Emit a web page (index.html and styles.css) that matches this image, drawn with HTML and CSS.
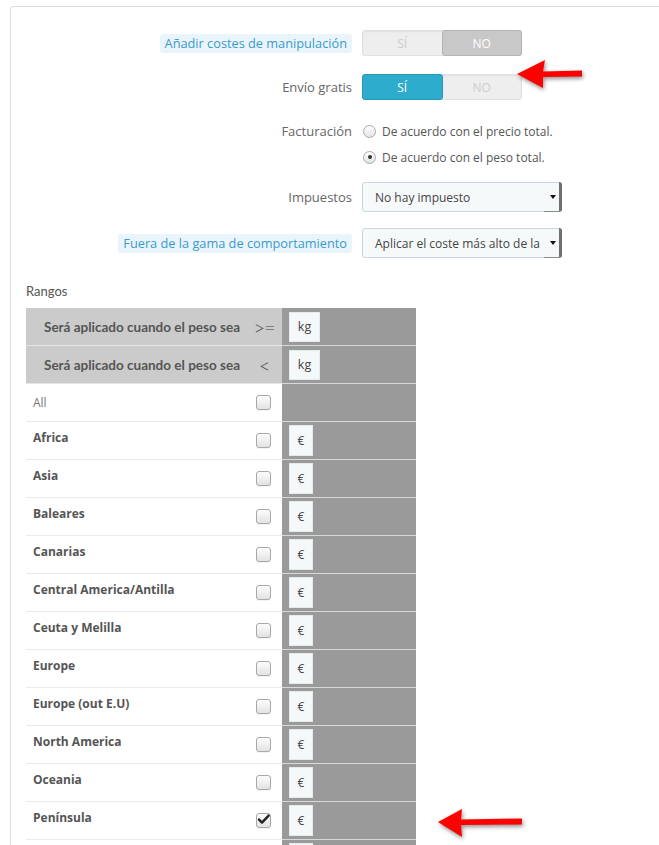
FILE: index.html
```html
<!DOCTYPE html>
<html lang="es">
<head>
<meta charset="utf-8">
<title>Transportista</title>
<link rel="stylesheet" href="styles.css">
</head>
<body>
<div class="page">
  <div class="panel">
    <div class="form-row mb18">
      <div class="label"><span class="hint">Añadir costes de manipulación</span></div>
      <div class="switch"><span class="opt">Sí</span><span class="opt active-grey">NO</span></div>
    </div>
    <div class="form-row mb18">
      <div class="label">Envío gratis</div>
      <div class="switch"><span class="opt active-blue">Sí</span><span class="opt">NO</span></div>
    </div>
    <div class="form-row mb12 top">
      <div class="label lh26">Facturación</div>
      <div class="radios">
        <div class="radio-line"><span class="radio"></span><span>De acuerdo con el precio total.</span></div>
        <div class="radio-line"><span class="radio checked"></span><span>De acuerdo con el peso total.</span></div>
      </div>
    </div>
    <div class="form-row mb16">
      <div class="label">Impuestos</div>
      <div class="select"><span class="select-text">No hay impuesto</span><span class="caret"></span></div>
    </div>
    <div class="form-row mb25">
      <div class="label"><span class="hint">Fuera de la gama de comportamiento</span></div>
      <div class="select"><span class="select-text">Aplicar el coste más alto de la</span><span class="caret"></span></div>
    </div>

    <div class="section-title">Rangos</div>
    <table class="ranges">
      <colgroup><col class="c-left"><col class="c-right"></colgroup>
      <tr class="head">
        <td class="hl"><div class="hcell"><span>Será aplicado cuando el peso sea</span><span class="op">&gt;=</span></div></td>
        <td class="val"><span class="unit kg">kg</span></td>
      </tr>
      <tr class="head">
        <td class="hl"><div class="hcell"><span>Será aplicado cuando el peso sea</span><span class="op">&lt;</span></div></td>
        <td class="val"><span class="unit kg">kg</span></td>
      </tr>
      <tr>
        <td class="zone"><div class="zcell"><span class="all">All</span><span class="cb"></span></div></td>
        <td class="val"></td>
      </tr>
      <tr><td class="zone"><div class="zcell"><span class="zname">Africa</span><span class="cb"></span></div></td><td class="val"><span class="unit">€</span></td></tr>
      <tr><td class="zone"><div class="zcell"><span class="zname">Asia</span><span class="cb"></span></div></td><td class="val"><span class="unit">€</span></td></tr>
      <tr><td class="zone"><div class="zcell"><span class="zname">Baleares</span><span class="cb"></span></div></td><td class="val"><span class="unit">€</span></td></tr>
      <tr><td class="zone"><div class="zcell"><span class="zname">Canarias</span><span class="cb"></span></div></td><td class="val"><span class="unit">€</span></td></tr>
      <tr><td class="zone"><div class="zcell"><span class="zname">Central America/Antilla</span><span class="cb"></span></div></td><td class="val"><span class="unit">€</span></td></tr>
      <tr><td class="zone"><div class="zcell"><span class="zname">Ceuta y Melilla</span><span class="cb"></span></div></td><td class="val"><span class="unit">€</span></td></tr>
      <tr><td class="zone"><div class="zcell"><span class="zname">Europe</span><span class="cb"></span></div></td><td class="val"><span class="unit">€</span></td></tr>
      <tr><td class="zone"><div class="zcell"><span class="zname">Europe (out E.U)</span><span class="cb"></span></div></td><td class="val"><span class="unit">€</span></td></tr>
      <tr><td class="zone"><div class="zcell"><span class="zname">North America</span><span class="cb"></span></div></td><td class="val"><span class="unit">€</span></td></tr>
      <tr><td class="zone"><div class="zcell"><span class="zname">Oceania</span><span class="cb"></span></div></td><td class="val"><span class="unit">€</span></td></tr>
      <tr><td class="zone"><div class="zcell"><span class="zname">Península</span><span class="cb checked"><svg viewBox="0 0 15 15" width="15" height="15"><path d="M3 7.6 L6 10.6 L12.6 3.6" fill="none" stroke="#222" stroke-width="2.4" stroke-linecap="round" stroke-linejoin="round"/></svg></span></div></td><td class="val"><span class="unit">€</span></td></tr>
      <tr><td class="zone"><div class="zcell"><span class="cb"></span></div></td><td class="val"><span class="unit"></span></td></tr>
    </table>
  </div>

  <svg class="arrow arrow-top" width="80" height="44" viewBox="0 0 80 44">
    <polygon points="7,22 35,8 33,19.5 72,18.5 72,24.5 33,25 33,36" fill="#ff0000"/>
  </svg>
  <svg class="arrow arrow-bottom" width="100" height="44" viewBox="0 0 100 44">
    <polygon points="8,22 32,9 31,19.5 92,18.5 92,24.5 31,25 32,37" fill="#ff0000"/>
  </svg>
</div>
</body>
</html>
```
FILE: styles.css
```css
html, body {
  margin: 0;
  padding: 0;
  background: #fff;
}
body {
  font-family: "Open Sans", "DejaVu Sans", sans-serif;
  font-size: 13px;
  color: #555;
}
.page {
  position: relative;
  height: 845px;
  overflow: hidden;
}
.panel {
  margin: 6px 0 0 10px;
  border-top: 1px solid #ddd;
  border-left: 1px solid #ddd;
  border-top-left-radius: 4px;
  padding-top: 23px;
}
.form-row {
  display: grid;
  grid-template-columns: 341px auto;
  column-gap: 10px;
  justify-content: start;
  align-items: center;
}
.form-row.top { align-items: start; }
.mb18 { margin-bottom: 18px; }
.mb12 { margin-bottom: 12px; }
.mb16 { margin-bottom: 16px; }
.mb25 { margin-bottom: 25px; }
.label {
  text-align: right;
  color: #666;
  font-size: 13px;
}
.lh26 { line-height: 26px; }
.hint {
  display: inline-block;
  background: #eaf5fb;
  color: #3a9acb;
  padding: 0 5px;
  font-size: 12.75px;
  line-height: 19px;
  border-radius: 3px;
}

/* switch */
.switch {
  display: flex;
  width: 160px;
  height: 26px;
  box-sizing: border-box;
  background: #eee;
  border: 1px solid #e0e0e0;
  border-radius: 3px;
  box-shadow: inset 0 1px 2px rgba(0,0,0,0.06);
}
.opt {
  flex: 1;
  display: flex;
  align-items: center;
  justify-content: center;
  color: #ccc;
  font-size: 12px;
  text-transform: uppercase;
}
.active-grey {
  background: #c8c8c8;
  border: 1px solid #b3b3b3;
  border-radius: 3px;
  margin: -1px -1px -1px 0;
  color: #fff;
}
.active-blue {
  background: #2eacce;
  border: 1px solid #2898b6;
  border-radius: 3px;
  margin: -1px 0 -1px -1px;
  color: #fff;
}

/* radios */
.radios { font-size: 12px; color: #555; }
.radio-line {
  display: flex;
  align-items: center;
  height: 26px;
  gap: 6px;
  padding-left: 1px;
}
.radio {
  width: 13px;
  height: 13px;
  box-sizing: border-box;
  border-radius: 50%;
  border: 1px solid #a9a9a9;
  background: linear-gradient(#ffffff, #e4e4e4);
  display: flex;
  align-items: center;
  justify-content: center;
}
.radio.checked::after {
  content: "";
  width: 4px;
  height: 4px;
  border-radius: 50%;
  background: #333;
}

/* select */
.select {
  width: 200px;
  height: 30px;
  box-sizing: border-box;
  border: 1px solid #c7d6db;
  border-radius: 3px;
  background: #f6f9fa;
  display: flex;
  align-items: center;
  font-size: 12px;
  color: #444;
}
.select-text {
  flex: 1;
  padding-left: 12px;
  white-space: nowrap;
  overflow: hidden;
}
.caret {
  width: 12px;
  align-self: stretch;
  margin: -1px -1px -1px 0;
  border-right: 3px solid #707070;
  border-bottom: 1px solid #8a8a8a;
  border-radius: 0 3px 3px 0;
  display: flex;
  align-items: center;
  justify-content: center;
  padding-left: 3px;
}
.caret::after {
  content: "";
  width: 0;
  height: 0;
  border-left: 3px solid transparent;
  border-right: 3px solid transparent;
  border-top: 4px solid #111;
}

/* ranges */
.section-title {
  margin-left: 15px;
  font-family: "Lato", "Open Sans", sans-serif;
  font-size: 13px;
  line-height: 16px;
  color: #555;
  margin-bottom: 9px;
}
.ranges {
  margin-left: 15px;
  width: 390px;
  border-collapse: collapse;
  table-layout: fixed;
}
.c-left { width: 256px; }
.c-right { width: 134px; }
.ranges td {
  height: 37px;
  padding: 0;
  border-bottom: 1px solid #eaeaea;
  vertical-align: middle;
}
.ranges td.hl {
  background: #cbcbcb;
  border-bottom: 1px solid #e6e6e6;
}
.ranges td.val {
  background: #9a9a9a;
  border-bottom: 1px solid #d8d8d8;
  padding-left: 7px;
}
.hcell {
  display: flex;
  align-items: center;
  padding-left: 18px;
  padding-right: 3px;
  font-family: "Lato", "Open Sans", sans-serif;
  font-weight: bold;
  font-size: 13.5px;
  color: #555;
}
.hcell span:first-child { flex: 1; }
.op {
  width: 30px;
  text-align: center;
  font-family: "Lato", sans-serif;
  font-weight: 300;
  font-size: 20px;
  letter-spacing: -1px;
  line-height: 20px;
  color: #444;
}
.unit {
  display: inline-flex;
  align-items: center;
  justify-content: center;
  width: 24px;
  height: 31px;
  box-sizing: border-box;
  background: #f5f8f9;
  border: 1px solid #e3ebee;
  font-size: 12px;
  color: #444;
  vertical-align: middle;
}
.unit.kg { width: 31px; height: 30px; font-size: 12.5px; }
.zcell {
  display: flex;
  align-items: center;
  justify-content: space-between;
  padding-left: 7px;
  padding-right: 11px;
}
.zcell .cb:only-child { margin-left: auto; }
.zname {
  font-weight: bold;
  font-size: 12px;
  color: #555;
  margin-bottom: 6px;
}
.all {
  font-size: 12px;
  color: #777;
}
.cb {
  width: 15px;
  height: 15px;
  box-sizing: border-box;
  border: 1px solid #a8a8a8;
  border-radius: 3px;
  background: linear-gradient(#fdfdfd, #e2e2e2);
  box-shadow: 0 1px 0 rgba(0,0,0,0.05);
  position: relative;
}
.cb svg {
  position: absolute;
  left: -1px;
  top: -2px;
}

/* arrows */
.arrow {
  position: absolute;
  filter: drop-shadow(1px 2px 2px rgba(0,0,0,0.45));
}
.arrow-top { left: 510px; top: 52px; }
.arrow-bottom { left: 430px; top: 800px; }
```
